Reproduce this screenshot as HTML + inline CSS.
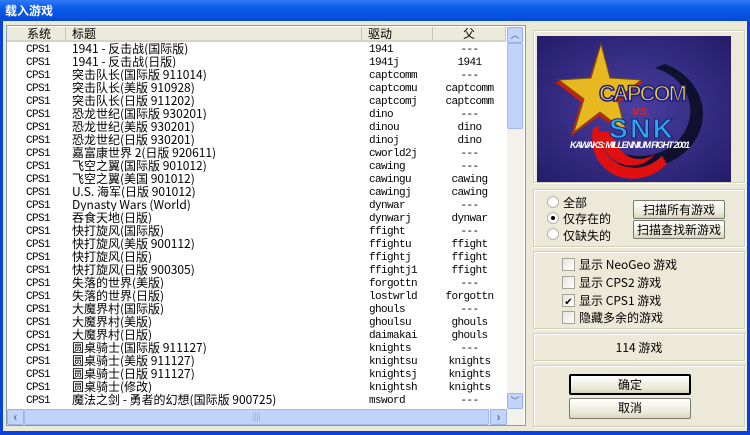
<!DOCTYPE html>
<html><head><meta charset="utf-8"><style>
*{margin:0;padding:0;box-sizing:border-box}
body{width:750px;height:435px;overflow:hidden;background:#0842d8;font-family:"WenQuanYi Zen Hei","Noto Sans CJK SC",sans-serif;font-size:12px;color:#000;position:relative}
.abs{position:absolute}
#title{left:0;top:0;width:750px;height:21px;background:linear-gradient(#2f7af5,#0a5ae8 40%,#0550e0 80%,#0a48c8);color:#fff;font-weight:bold;font-size:12px;line-height:21px;padding-left:5px}
#client{left:3px;top:21px;width:744px;height:410px;background:#ece9d8}
#list{left:6px;top:25px;width:520px;height:401px;background:#fff;border:1px solid #7f9db9}
.hdr{position:absolute;top:1px;height:15px;background:#ebeadb;border-bottom:2px solid #d6d3c6;line-height:14px;border-right:1px solid #c7c5b2}
.row{position:absolute;left:0;height:13px;width:500px;white-space:nowrap}
.row span{position:absolute;top:0;height:13px;line-height:13px}
.row span.m{top:2px;height:11px;line-height:12px}
.m{font-family:"Liberation Mono",monospace;font-size:11px;letter-spacing:-0.6px}
.grp{position:absolute;left:533px;width:212px;border:1px solid #d0d0bf;box-shadow:inset 1px 1px #fff,1px 1px #fff}
.btn{position:absolute;background:linear-gradient(#fff,#ece9d8 70%,#d8d4c2);border:1px solid #7a7a70;border-radius:2px;text-align:center;line-height:17px}
.cb{position:absolute;width:13px;height:13px;border:1px solid #a5a399;background:linear-gradient(135deg,#e5e4dc,#fff)}
.rd{position:absolute;width:12px;height:12px;border-radius:50%;border:1px solid #b5b3a6;background:#fff}
</style></head><body>
<div id="title" class="abs">载入游戏</div>
<div id="client" class="abs"></div>
<div id="list" class="abs">
 <div class="hdr" style="left:0;width:59px;padding-left:20px">系统</div>
 <div class="hdr" style="left:59px;width:296px;padding-left:6px">标题</div>
 <div class="hdr" style="left:355px;width:71px;padding-left:6px">驱动</div>
 <div class="hdr" style="left:426px;width:73px;text-align:center">父</div>
 <div id="rows"></div>
 <div class="abs" style="left:500px;top:1px;width:17px;height:382px;background:#f3f1ec"></div>
 <div class="abs" style="left:500px;top:1px;width:16px;height:16px;background:#c2d3fc;border:1px solid #9ab2e8;border-radius:2px;text-align:center;font-size:9px;line-height:14px;color:#4d6185">︿</div>
 <div class="abs" style="left:500px;top:17px;width:16px;height:86px;background:#c1d3fb;border:1px solid #a3b8e8;border-radius:2px"></div>
 <div class="abs" style="left:500px;top:367px;width:16px;height:16px;background:#c2d3fc;border:1px solid #9ab2e8;border-radius:2px;text-align:center;font-size:9px;line-height:14px;color:#4d6185">﹀</div>
 <div class="abs" style="left:0;top:383px;width:517px;height:16px;background:#f3f1ec"></div>
 <div class="abs" style="left:0;top:383px;width:17px;height:16px;background:#c2d3fc;border:1px solid #9ab2e8;border-radius:2px;text-align:center;line-height:14px;color:#4d6185;font-weight:bold">‹</div>
 <div class="abs" style="left:17px;top:383px;width:465px;height:16px;background:#c1d3fb;border:1px solid #a3b8e8;border-radius:2px;text-align:center;font-size:8px;line-height:14px;color:#8aa3d8">||||</div>
 <div class="abs" style="left:483px;top:383px;width:17px;height:16px;background:#c2d3fc;border:1px solid #9ab2e8;border-radius:2px;text-align:center;line-height:14px;color:#4d6185;font-weight:bold">›</div>
</div>

<div class="grp" style="top:30px;height:153px"></div>
<svg class="abs" style="left:537px;top:36px" width="194" height="146" viewBox="0 0 194 146">
 <defs><radialGradient id="bg" cx="0.5" cy="0.5" r="0.7"><stop offset="0" stop-color="#4a3fa0"/><stop offset="1" stop-color="#241c6a"/></radialGradient></defs>
 <rect width="194" height="146" fill="url(#bg)"/>
 <path d="M128 28 A48 42 0 1 1 80 128 L88 118 A38 34 0 1 0 118 32 Z" fill="#0a0a20" opacity=".85"/>
 <path d="M62 90 C58 128 100 145 125 120 L130 128 C100 158 48 140 56 92 Z" fill="#e01010"/>
 <path d="M60 95 L75 96 C80 120 100 130 118 118 C100 140 66 130 60 95Z" fill="#e01010"/>
 <polygon points="62,12 52,44 18,46 44,66 34,100 62,80 90,100 82,66 106,46 72,44" fill="#c82010"/>
 <polygon points="64,8 54,42 22,44 47,63 37,96 63,76 89,96 80,63 104,44 73,42" fill="#e8b820" stroke="#7a5500"/>
 <text x="106" y="65" text-anchor="middle" font-family="Liberation Sans" font-weight="bold" font-size="22" fill="#f0d020" stroke="#1a1a90" stroke-width="1.5" textLength="88">CAPCOM</text>
 <text x="104" y="79" text-anchor="middle" font-family="Liberation Sans" font-weight="bold" font-style="italic" font-size="11" fill="#e02020">VS.</text>
 <text x="104" y="102" text-anchor="middle" font-family="Liberation Sans" font-weight="bold" font-size="28" fill="#30a8e8" stroke="#10207a" stroke-width="1" textLength="64">SNK</text>
 <text x="93" y="112" text-anchor="middle" font-family="Liberation Sans" font-weight="bold" font-style="italic" font-size="9" fill="#fff" textLength="120">KAWAKS: MILLENNIUM FIGHT 2001</text>
</svg>

<div class="grp" style="top:189px;height:58px"></div>
<div class="rd" style="left:547px;top:196px"></div><div class="abs" style="left:563px;top:194px">全部</div>
<div class="rd" style="left:547px;top:212px"></div><div class="abs" style="left:551px;top:216px;width:4px;height:4px;background:#000;border-radius:50%"></div><div class="abs" style="left:563px;top:210px">仅存在的</div>
<div class="rd" style="left:547px;top:228px"></div><div class="abs" style="left:563px;top:227px">仅缺失的</div>
<div class="btn" style="left:633px;top:200px;width:92px;height:19px">扫描所有游戏</div>
<div class="btn" style="left:633px;top:220px;width:92px;height:19px">扫描查找新游戏</div>

<div class="grp" style="top:251px;height:78px"></div>
<div class="cb" style="left:562px;top:258px"></div><div class="abs" style="left:579px;top:256px">显示 NeoGeo 游戏</div>
<div class="cb" style="left:562px;top:276px"></div><div class="abs" style="left:579px;top:274px">显示 CPS2 游戏</div>
<div class="cb" style="left:562px;top:294px;font-size:10px;line-height:11px;text-align:center">✔</div><div class="abs" style="left:579px;top:292px">显示 CPS1 游戏</div>
<div class="cb" style="left:562px;top:311px"></div><div class="abs" style="left:579px;top:309px">隐藏多余的游戏</div>

<div class="grp" style="top:333px;height:28px"></div>
<div class="abs" style="left:533px;top:339px;width:212px;text-align:center">114 游戏</div>

<div class="grp" style="top:365px;height:62px"></div>
<div class="btn" style="left:569px;top:374px;width:122px;height:21px;border:2px solid #000">确定</div>
<div class="btn" style="left:569px;top:398px;width:122px;height:21px">取消</div>

<script>
var d=[["1941 - 反击战(国际版)","1941","---"],["1941 - 反击战(日版)","1941j","1941"],["突击队长(国际版 911014)","captcomm","---"],["突击队长(美版 910928)","captcomu","captcomm"],["突击队长(日版 911202)","captcomj","captcomm"],["恐龙世纪(国际版 930201)","dino","---"],["恐龙世纪(美版 930201)","dinou","dino"],["恐龙世纪(日版 930201)","dinoj","dino"],["嘉富康世界 2(日版 920611)","cworld2j","---"],["飞空之翼(国际版 901012)","cawing","---"],["飞空之翼(美国 901012)","cawingu","cawing"],["U.S. 海军(日版 901012)","cawingj","cawing"],["Dynasty Wars (World)","dynwar","---"],["吞食天地(日版)","dynwarj","dynwar"],["快打旋风(国际版)","ffight","---"],["快打旋风(美版 900112)","ffightu","ffight"],["快打旋风(日版)","ffightj","ffight"],["快打旋风(日版 900305)","ffightj1","ffight"],["失落的世界(美版)","forgottn","---"],["失落的世界(日版)","lostwrld","forgottn"],["大魔界村(国际版)","ghouls","---"],["大魔界村(美版)","ghoulsu","ghouls"],["大魔界村(日版)","daimakai","ghouls"],["圆桌骑士(国际版 911127)","knights","---"],["圆桌骑士(美版 911127)","knightsu","knights"],["圆桌骑士(日版 911127)","knightsj","knights"],["圆桌骑士(修改)","knightsh","knights"],["魔法之剑 - 勇者的幻想(国际版 900725)","msword","---"],["魔法之剑 - 勇者的幻想(国际版","",""]];
var h="";d.forEach(function(r,i){var t=16+i*13;if(t>370)return;h+='<div class="row" style="top:'+t+'px;height:'+Math.min(13,383-t)+'px;overflow:hidden"><span class="m" style="left:19px">CPS1</span><span style="left:65px">'+r[0]+'</span><span class="m" style="left:362px">'+r[1]+'</span><span class="m" style="left:426px;width:73px;text-align:center">'+r[2]+'</span></div>'});
document.getElementById("rows").innerHTML=h;
</script>
</body></html>
